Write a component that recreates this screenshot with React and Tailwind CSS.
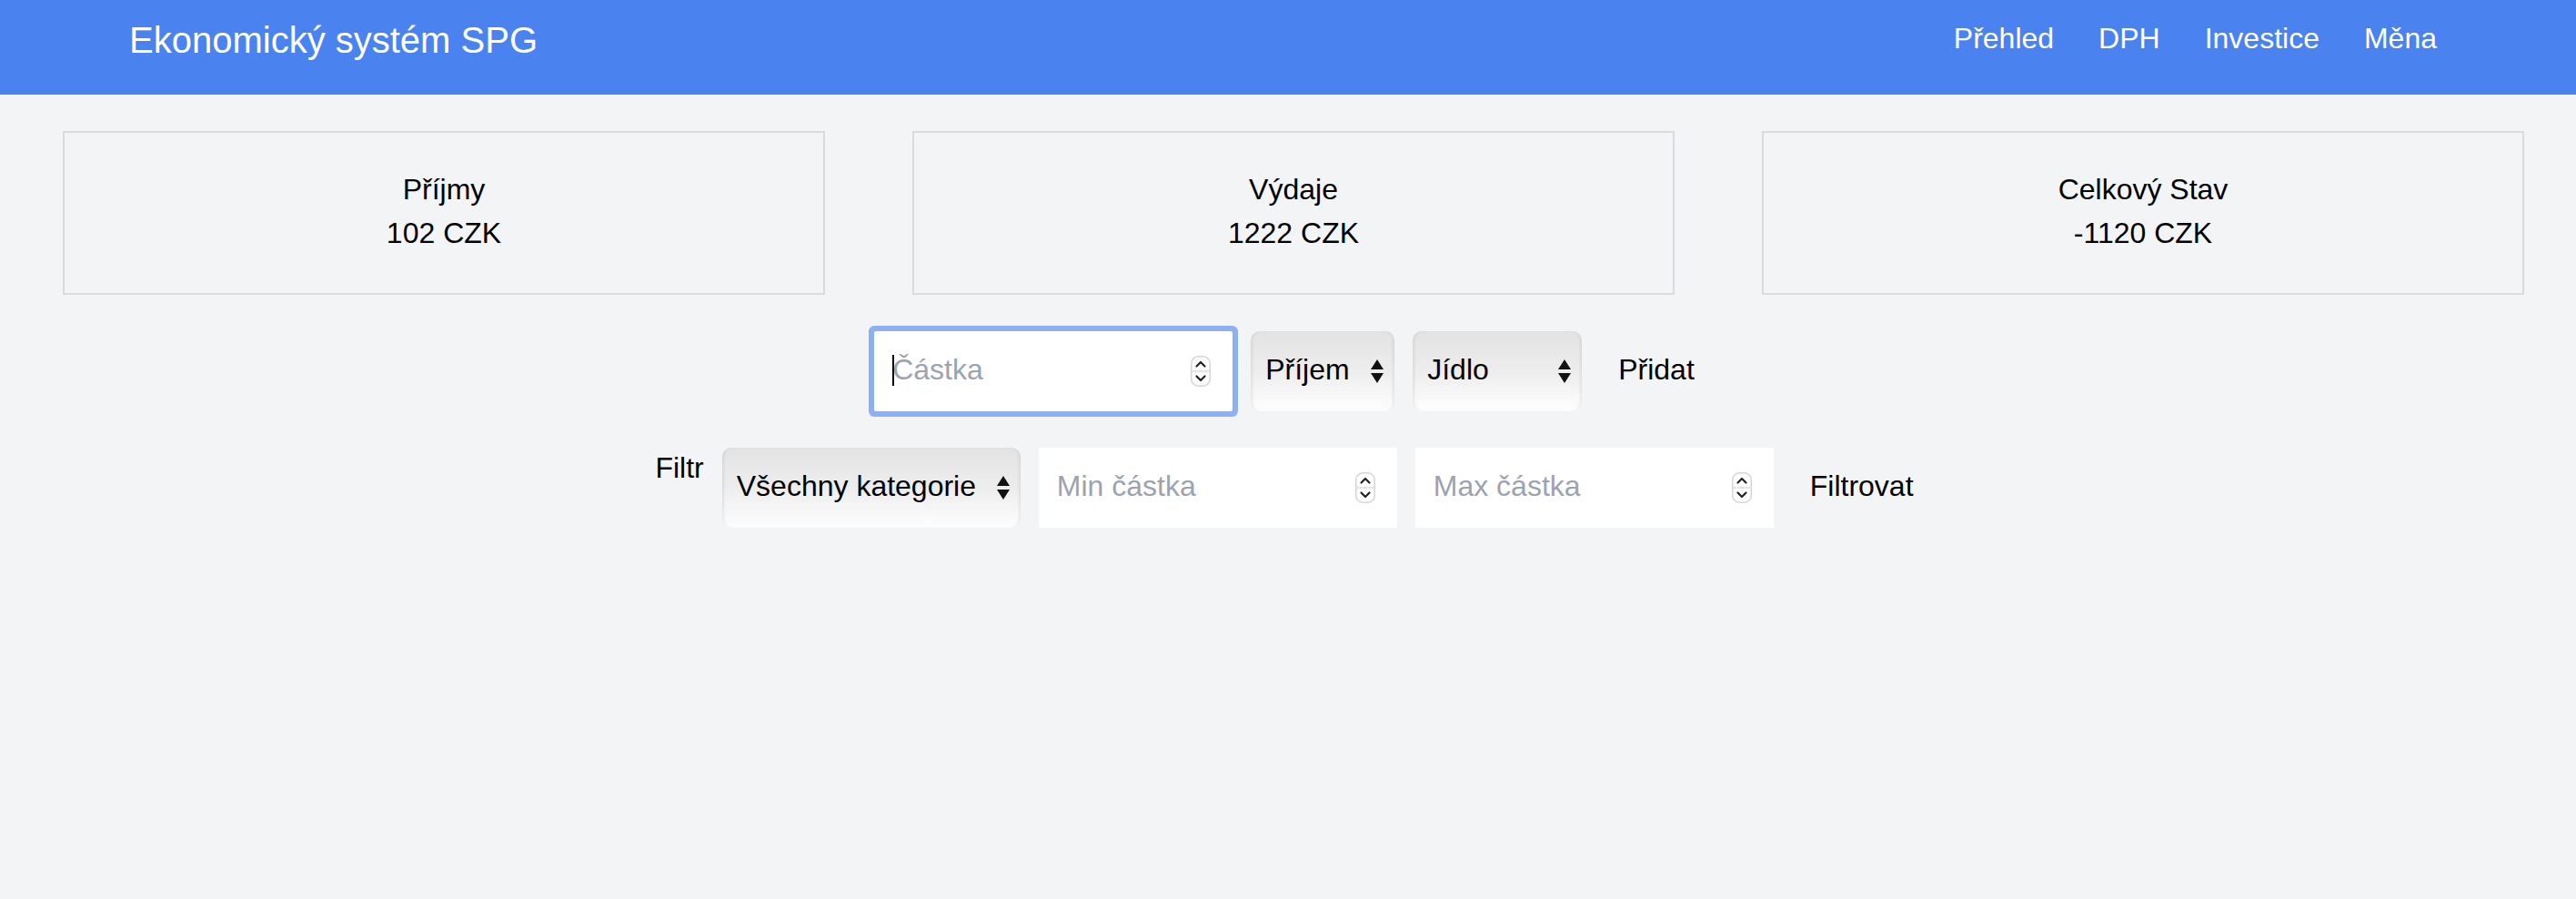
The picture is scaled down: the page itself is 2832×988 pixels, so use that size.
import React from "react";

const navItems = ["Přehled", "DPH", "Investice", "Měna"];

const summary = [
  { label: "Příjmy", value: "102 CZK" },
  { label: "Výdaje", value: "1222 CZK" },
  { label: "Celkový Stav", value: "-1120 CZK" },
];

function Spinner() {
  return (
    <svg width="22" height="34" viewBox="0 0 22 34" className="shrink-0 mt-[4px]">
      <rect x="0.75" y="0.75" width="20.5" height="32.5" rx="7.5" fill="#fff" stroke="#d6d6d6" strokeWidth="1.5" />
      <line x1="1" y1="17" x2="21" y2="17" stroke="#dcdcdc" strokeWidth="1.5" />
      <polyline points="6.5,11.5 11,7 15.5,11.5" fill="none" stroke="#222" strokeWidth="2.2" strokeLinecap="round" strokeLinejoin="round" />
      <polyline points="6.5,22.5 11,27 15.5,22.5" fill="none" stroke="#222" strokeWidth="2.2" strokeLinecap="round" strokeLinejoin="round" />
    </svg>
  );
}

function SelectArrows() {
  return (
    <svg width="14" height="26" viewBox="0 0 14 26" className="shrink-0 mt-[4px]">
      <polygon points="7,0 14,11 0,11" fill="#111" />
      <polygon points="0,15 14,15 7,26" fill="#111" />
    </svg>
  );
}

function FakeSelect({ value, width }) {
  return (
    <div
      className={`${width} h-[88px] flex items-center justify-between pl-[16px] pr-[12px] pb-[4px] rounded-[10px] bg-linear-to-b from-[#e3e3e3] via-[#ededed] to-[#fefefe] shadow-[inset_3px_0_3px_-1px_rgba(0,0,0,0.07),inset_-3px_0_3px_-1px_rgba(0,0,0,0.07)] text-black cursor-default`}
    >
      <span className="truncate">{value}</span>
      <SelectArrows />
    </div>
  );
}

function NumberInput({ placeholder, focused }) {
  return (
    <div
      className={`relative w-[394px] h-[88px] bg-white flex items-center pl-[20px] pr-[24px] pb-[4px] ${
        focused ? "rounded-[2px] ring-[6px] ring-[#8db0f1]" : ""
      }`}
    >
      {focused && <span className="absolute left-[20px] top-[26px] w-[2px] h-[34px] bg-black" />}
      <input
        type="text"
        placeholder={placeholder}
        className="flex-1 min-w-0 bg-transparent outline-none text-black placeholder:text-[#9ca3af] leading-[48px]"
      />
      <Spinner />
    </div>
  );
}

export default function App() {
  return (
    <div className="min-h-screen bg-[#f3f4f6] font-['Liberation_Sans',Arial,sans-serif] text-[32px] leading-[48px] text-black">
      <header className="h-[104px] bg-[#4a83ef] flex justify-between items-start pl-[142px] pr-[153px] pt-[16px] text-white">
        <h1 className="text-[40px] leading-[56px] font-normal">Ekonomický systém SPG</h1>
        <nav className="flex gap-[49px] mt-[2px]">
          {navItems.map((item) => (
            <a key={item} href="#" className="text-white">
              {item}
            </a>
          ))}
        </nav>
      </header>

      <main className="pt-[40px] pl-[69px] pr-[57px]">
        <div className="grid grid-cols-3 gap-[96px]">
          {summary.map((s) => (
            <div key={s.label} className="border-2 border-[#d9dbdf] pt-[38px] pb-[42px] text-center">
              <div>{s.label}</div>
              <div>{s.value}</div>
            </div>
          ))}
        </div>

        <div className="mt-[40px] flex justify-center items-center gap-[20px]">
          <NumberInput placeholder="Částka" focused />
          <FakeSelect value="Příjem" width="w-[158px]" />
          <FakeSelect value="Jídlo" width="w-[186px]" />
          <button className="px-[20px] h-[88px] pb-[4px] text-black">Přidat</button>
        </div>

        <div className="mt-[40px] flex justify-center items-center gap-[20px]">
          <label className="self-start -mt-[2px]">Filtr</label>
          <FakeSelect value="Všechny kategorie" width="w-[328px]" />
          <NumberInput placeholder="Min částka" />
          <NumberInput placeholder="Max částka" />
          <button className="px-[20px] h-[88px] pb-[4px] text-black">Filtrovat</button>
        </div>
      </main>
    </div>
  );
}
